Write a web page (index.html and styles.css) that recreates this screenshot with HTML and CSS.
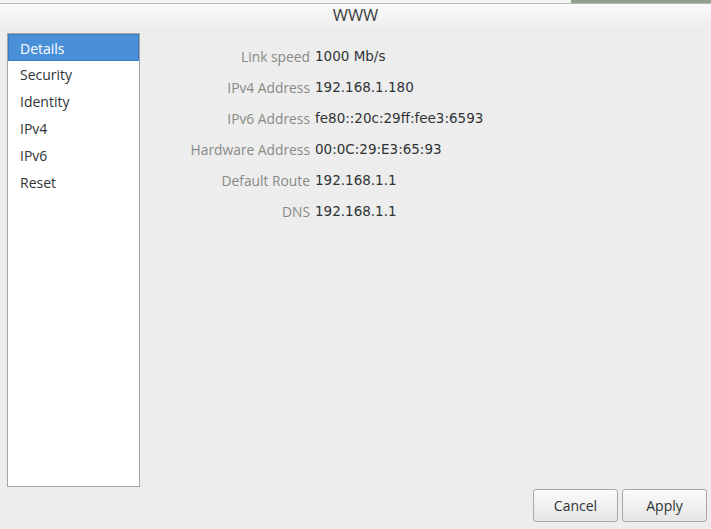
FILE: index.html
```html
<!DOCTYPE html>
<html lang="en">
<head>
  <meta charset="UTF-8" />
  <title>WWW</title>
  <link rel="stylesheet" href="styles.css">
</head>
<body>
  <div class="behind">
    <div class="behind-left"></div>
    <div class="behind-right"></div>
  </div>
  <div class="dialog">
    <div class="titlebar">WWW</div>
    <div class="content">
      <ul class="sidebar">
        <li class="selected">Details</li>
        <li>Security</li>
        <li>Identity</li>
        <li>IPv4</li>
        <li>IPv6</li>
        <li>Reset</li>
      </ul>
      <div class="details">
        <div class="label">Link speed</div><div class="value">1000 Mb/s</div>
        <div class="label">IPv4 Address</div><div class="value">192.168.1.180</div>
        <div class="label">IPv6 Address</div><div class="value">fe80::20c:29ff:fee3:6593</div>
        <div class="label">Hardware Address</div><div class="value">00:0C:29:E3:65:93</div>
        <div class="label">Default Route</div><div class="value">192.168.1.1</div>
        <div class="label">DNS</div><div class="value">192.168.1.1</div>
      </div>
    </div>
    <div class="buttons">
      <button>Cancel</button>
      <button>Apply</button>
    </div>
  </div>
</body>
</html>
```

FILE: styles.css
```css
body {
  margin: 0;
  font-family: 'Open Sans', 'DejaVu Sans', sans-serif;
  background: #ededed;
  color: #2e3436;
  width: 711px;
  height: 529px;
  overflow: hidden;
}
.behind {
  display: flex;
  height: 3px;
  background: #f4f4f4;
  border-bottom: 1px solid #b8b8b8;
}
.behind-left {
  flex: 1;
}
.behind-right {
  width: 139px;
  background: #8fa08c;
  border-left: 1px solid #999;
}
.dialog {
  display: flex;
  flex-direction: column;
  height: 525px;
}
.titlebar {
  height: 26px;
  line-height: 22px;
  text-align: center;
  font-size: 16.5px;
  color: #3a3f40;
  background: linear-gradient(#fafafa, #ededed);
}
.content {
  display: flex;
  flex: 1;
  padding: 3px 0 0 7px;
}
.sidebar {
  list-style: none;
  margin: 0;
  padding: 0;
  width: 131px;
  height: 452px;
  background: #fff;
  border: 1px solid #a5a5a5;
}
.sidebar li {
  height: 27px;
  line-height: 28px;
  padding-left: 12px;
  font-size: 14px;
  color: #2e3436;
}
.sidebar li.selected {
  background: #4a90d9;
  color: #fff;
  border: 1px solid #3a7bc8;
  height: 25px;
  line-height: 27px;
  padding-left: 11px;
}
.details {
  display: grid;
  grid-template-columns: 170px auto;
  grid-auto-rows: 31px;
  column-gap: 6px;
  align-content: start;
  padding-top: 8px;
  font-size: 13.8px;
}
.label {
  text-align: right;
  color: #888a85;
  line-height: 31px;
}
.value {
  line-height: 31px;
  color: #2e3436;
  font-family: 'DejaVu Sans', sans-serif;
  font-size: 13.5px;
  margin-left: -1px;
}
.buttons {
  display: flex;
  justify-content: flex-end;
  gap: 4px;
  padding: 0 4px 7px 0;
}
.buttons button {
  width: 85px;
  height: 33px;
  font-family: inherit;
  font-size: 14px;
  color: #2e3436;
  background: linear-gradient(#fafafa, #e6e6e6);
  border: 1px solid #a8a8a8;
  border-radius: 3px;
}
```
